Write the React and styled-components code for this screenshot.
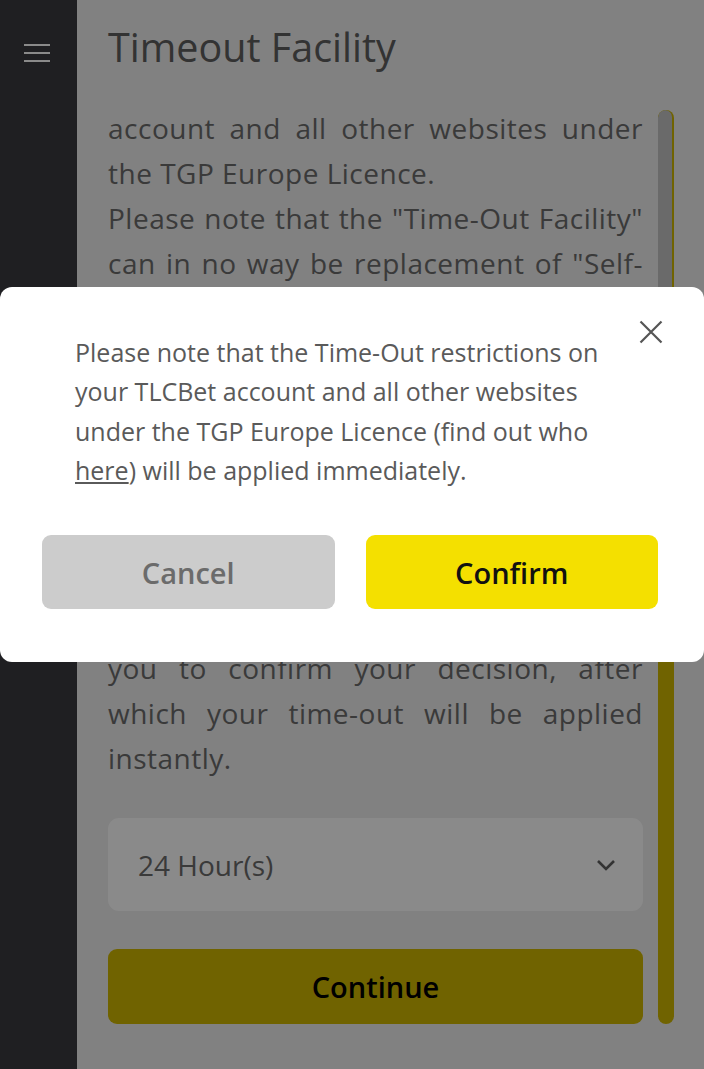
import React from "react";
import styled, { createGlobalStyle } from "styled-components";

const Global = createGlobalStyle`
  html, body { margin: 0; padding: 0; }
  body {
    font-family: "Open Sans", "Noto Sans", "Liberation Sans", sans-serif;
    background: #eeeeee;
  }
  * { box-sizing: border-box; }
`;

const Page = styled.div`
  display: flex;
  min-height: 1069px;
  background: #eeeeee;
`;

const Sidebar = styled.aside`
  width: 77px;
  flex: none;
  background: #3a3a40;
  display: flex;
  justify-content: center;
  padding-top: 44px;
`;

const Burger = styled.button`
  width: 26px;
  height: 18px;
  padding: 0;
  margin-right: 3px;
  border: 0;
  background: transparent;
  display: flex;
  flex-direction: column;
  justify-content: space-between;
  span {
    display: block;
    height: 2px;
    background: #ffffff;
  }
`;

const Main = styled.main`
  flex: 1;
  padding: 20px 30px 0 31px;
  display: flex;
  flex-direction: column;
`;

const Title = styled.h1`
  margin: 0;
  font-size: 39.5px;
  line-height: 54px;
  font-weight: 400;
  color: #5e5e5e;
`;

const ScrollArea = styled.div`
  margin-top: 32px;
  display: flex;
  gap: 15px;
`;

const Content = styled.div`
  width: 535px;
  flex: none;
`;

const Para = styled.p`
  margin: 0;
  font-size: 28px;
  line-height: 45px;
  letter-spacing: 0.5px;
  color: #6c6c6c;
  text-align: justify;
`;

const Track = styled.div`
  width: 16px;
  margin-top: 4px;
  border-radius: 8px;
  background: #d0b700;
  overflow: hidden;
`;

const Thumb = styled.div`
  width: 14px;
  height: 220px;
  border-radius: 8px;
  background: #c4c4c4;
`;

const Select = styled.div`
  margin-top: 37px;
  height: 93px;
  border-radius: 11px;
  background: #ffffff;
  display: flex;
  align-items: center;
  justify-content: space-between;
  padding: 0 27px 0 30px;
  font-size: 28px;
  color: #6c6c6c;
`;

const Continue = styled.button`
  margin-top: 38px;
  width: 100%;
  height: 75px;
  border: 0;
  border-radius: 9px;
  background: #d0b700;
  font-family: inherit;
  font-size: 29px;
  font-weight: 600;
  color: #000;
`;

const Overlay = styled.div`
  position: fixed;
  inset: 0;
  background: rgba(0, 0, 0, 0.46);
  display: flex;
  flex-direction: column;
  padding-top: 287px;
`;

const Modal = styled.div`
  position: relative;
  background: #ffffff;
  border-radius: 12px;
  padding: 46px 46px 53px 42px;
`;

const Close = styled.button`
  position: absolute;
  top: 33px;
  right: 41px;
  width: 24px;
  height: 24px;
  padding: 0;
  border: 0;
  background: transparent;
  display: flex;
`;

const Message = styled.p`
  margin: 0;
  padding: 0 30px 0 33px;
  font-size: 25px;
  line-height: 39.3px;
  color: #5a5a5a;
  a {
    color: inherit;
    text-decoration: underline;
  }
`;

const Buttons = styled.div`
  margin-top: 45px;
  display: grid;
  grid-template-columns: 1fr 1fr;
  gap: 31px;
`;

const ModalButton = styled.button`
  height: 74px;
  border: 0;
  border-radius: 9px;
  font-family: inherit;
  font-size: 29px;
  font-weight: 600;
  background: ${(p) => (p.$primary ? "#f4e000" : "#cccccc")};
  color: ${(p) => (p.$primary ? "#111111" : "#6b6b6b")};
`;

export default function App() {
  return (
    <>
      <Global />
      <Page>
        <Sidebar>
          <Burger aria-label="menu">
            <span />
            <span />
            <span />
          </Burger>
        </Sidebar>
        <Main>
          <Title>Timeout Facility</Title>
          <ScrollArea>
            <Content>
              <Para>account and all other websites under the TGP Europe Licence.</Para>
              <Para>
                Please note that the "Time-Out Facility" can in no way be replacement of "Self-Exclusion". If you
                feel that you may be developing a gambling problem, please make use of our Self-Exclusion facility
                instead, which will close your account for a longer period. Select the period for which you would
                like to take a break and click on "Continue". A pop-up will appear asking
                <br />
                you to confirm your decision, after which your time-out will be applied instantly.
              </Para>
              <Select>
                <span>24 Hour(s)</span>
                <svg width="20" height="12" viewBox="0 0 20 12">
                  <polyline points="2,2 10,10 18,2" fill="none" stroke="#5e5e5e" strokeWidth="2.6" />
                </svg>
              </Select>
              <Continue>Continue</Continue>
            </Content>
            <Track>
              <Thumb />
            </Track>
          </ScrollArea>
        </Main>
      </Page>
      <Overlay>
        <Modal>
          <Close aria-label="close">
            <svg width="24" height="24" viewBox="0 0 24 24">
              <path d="M1.5 1.5 L22.5 22.5 M22.5 1.5 L1.5 22.5" stroke="#555" strokeWidth="2.2" fill="none" />
            </svg>
          </Close>
          <Message>
            Please note that the Time-Out restrictions on your TLCBet account and all other websites under the TGP
            Europe Licence (find out who <a href="#">here</a>) will be applied immediately.
          </Message>
          <Buttons>
            <ModalButton>Cancel</ModalButton>
            <ModalButton $primary>Confirm</ModalButton>
          </Buttons>
        </Modal>
      </Overlay>
    </>
  );
}
